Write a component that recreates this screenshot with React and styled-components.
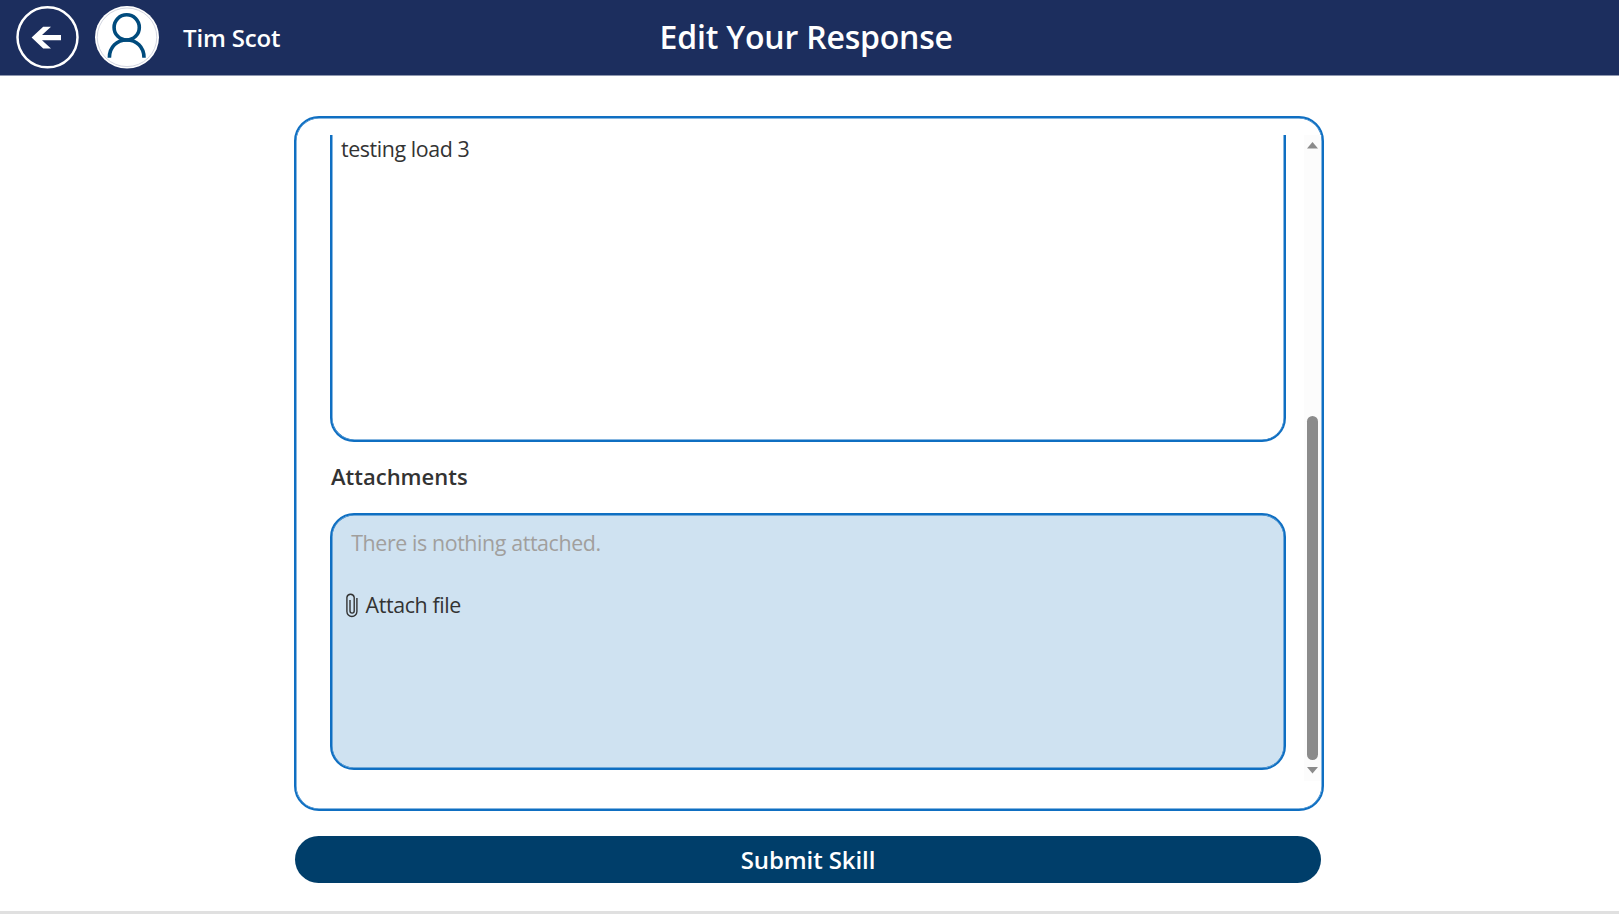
import React from "react";
import styled, { createGlobalStyle } from "styled-components";

const GlobalStyle = createGlobalStyle`
  * { box-sizing: border-box; }
  html, body { margin: 0; background: #fff; overflow: hidden; }
  body { font-family: "Open Sans", "Noto Sans", sans-serif; color: #333; }
  svg { display: block; }
  button { font: inherit; letter-spacing: inherit; border: 0; padding: 0; background: none; color: inherit; cursor: pointer; }
`;

const Page = styled.div`
  height: 914px;
  display: flex;
  flex-direction: column;
  align-items: center;
`;

const Header = styled.header`
  width: 100%;
  height: 76px;
  flex: none;
  display: grid;
  grid-template-columns: 659.6px 1fr;
  align-items: center;
  background: #1c2e5e;
  border-bottom: 1px solid #8e97af;
  color: #fff;
`;

const Profile = styled.div`
  display: flex;
  align-items: center;
  padding-left: 16px;
`;

const BackButton = styled.button`
  width: 63px;
  height: 63px;
  margin-right: 16px;
`;

const Avatar = styled.div`
  width: 64px;
  height: 63px;
`;

const UserName = styled.span`
  margin-left: 24px;
  font-size: 24px;
  line-height: 33px;
  font-weight: 600;
  letter-spacing: -0.15px;
  white-space: nowrap;
`;

const Title = styled.h1`
  margin: 0 0 1px;
  font-size: 32px;
  line-height: 44px;
  font-weight: 600;
  letter-spacing: -0.2px;
  white-space: nowrap;
`;

const Card = styled.main`
  width: 1030px;
  height: 695px;
  flex: none;
  margin: 40px 1px 0 0;
  display: flex;
  justify-content: space-between;
  border: 2px solid #0f6fc2;
  border-radius: 25px;
  box-shadow: inset 0 0 0 0.5px #0f6fc2;
  padding: 17px 1px 27px 34px;
`;

const Form = styled.div`
  width: 956px;
  overflow: hidden;
  display: flex;
  flex-direction: column;
`;

const Answer = styled.div`
  height: 307px;
  flex: none;
  border: 2px solid #0f6fc2;
  border-top: 0;
  border-radius: 0 0 24px 24px;
  box-shadow: inset 0.5px -0.5px 0 0 #0f6fc2, inset -0.5px 0 0 0 #0f6fc2;
  padding: 0 9px;
  font-size: 21.4px;
  letter-spacing: -0.42px;
  line-height: 27px;
`;

const Label = styled.h2`
  margin: 20px 0 22px 1px;
  font-size: 22px;
  line-height: 29px;
  font-weight: 600;
`;

const Attachments = styled.section`
  height: 257px;
  flex: none;
  border: 2px solid #0f6fc2;
  border-radius: 24px;
  box-shadow: inset 0 0 0 0.5px #0f6fc2;
  background: #cfe2f1;
  padding: 13px 13.6px;
  font-size: 21.4px;
  letter-spacing: -0.4px;
  line-height: 30px;
`;

const EmptyNote = styled.p`
  margin: 0 0 32px 5.6px;
  color: #a19f9d;
`;

const AttachButton = styled.button`
  display: flex;
  align-items: center;
  gap: 8px;
`;

const ScrollTrack = styled.div`
  width: 17px;
  height: 646px;
  background: #fcfcfc;
  display: flex;
  flex-direction: column;
  align-items: center;
  padding: 7px 0;
`;

const Thumb = styled.div`
  width: 11px;
  height: 344px;
  margin: auto 0 7px;
  border-radius: 6px;
  background: #8b8b8b;
`;

const Submit = styled.button`
  width: 1026px;
  height: 47px;
  flex: none;
  margin: 25px 3px 0 0;
  border-radius: 24px;
  background: #003e6a;
  color: #fff;
  font-size: 24px;
  line-height: 47px;
  font-weight: 600;
  letter-spacing: -0.1px;
`;

const Footer = styled.footer`
  width: 100%;
  height: 3px;
  margin-top: auto;
  background: #e0e0e0;
`;

const BackIcon = () => (
  <svg width="63" height="63" viewBox="0 0 63 63">
    <circle cx="31.5" cy="31.3" r="30" fill="none" stroke="#fff" strokeWidth="2.5" />
    <path d="M15.6 31.5 27.2 20.8H35L26 29H45V34.2H26L35 42.4H27.2Z" fill="#fff" />
  </svg>
);

const PersonIcon = () => (
  <svg width="64" height="63" viewBox="0 0 64 63">
    <ellipse cx="32" cy="31.3" rx="32" ry="31.3" fill="#fff" />
    <ellipse cx="32" cy="31.3" rx="29.8" ry="29.3" fill="none" stroke="#c6cad8" strokeWidth="0.8" />
    <g fill="none" stroke="#004b7d" strokeWidth="3.6">
      <circle cx="31.7" cy="21.4" r="12.6" />
      <path d="M14.4 51.7C14.4 41 22 34 31.7 34S49 41 49 51.7" />
    </g>
  </svg>
);

const ClipIcon = () => (
  <svg width="12" height="25" viewBox="0 0 12 25" fill="none" stroke="#333" strokeWidth="1.4">
    <path d="M8.2 6V18A2.1 2.1 0 0 1 4 18V7M8.2 7V4.4A3.7 3.7 0 0 0 .9 4.4V18.5A5 5 0 0 0 10.9 18.5V5" />
  </svg>
);

const Arrow = ({ down }) => (
  <svg width="11" height="7" viewBox="0 0 11 7" fill="#8b8b8b">
    <path d={down ? "M0 0H11L5.5 6.5Z" : "M0 6.5H11L5.5 0Z"} />
  </svg>
);

export default function App() {
  return (
    <Page>
      <GlobalStyle />
      <Header>
        <Profile>
          <BackButton aria-label="Back"><BackIcon /></BackButton>
          <Avatar><PersonIcon /></Avatar>
          <UserName>Tim Scot</UserName>
        </Profile>
        <Title>Edit Your Response</Title>
      </Header>
      <Card>
        <Form>
          <Answer>testing load 3</Answer>
          <Label>Attachments</Label>
          <Attachments>
            <EmptyNote>There is nothing attached.</EmptyNote>
            <AttachButton><ClipIcon />Attach file</AttachButton>
          </Attachments>
        </Form>
        <ScrollTrack>
          <Arrow />
          <Thumb />
          <Arrow down />
        </ScrollTrack>
      </Card>
      <Submit>Submit Skill</Submit>
      <Footer />
    </Page>
  );
}
